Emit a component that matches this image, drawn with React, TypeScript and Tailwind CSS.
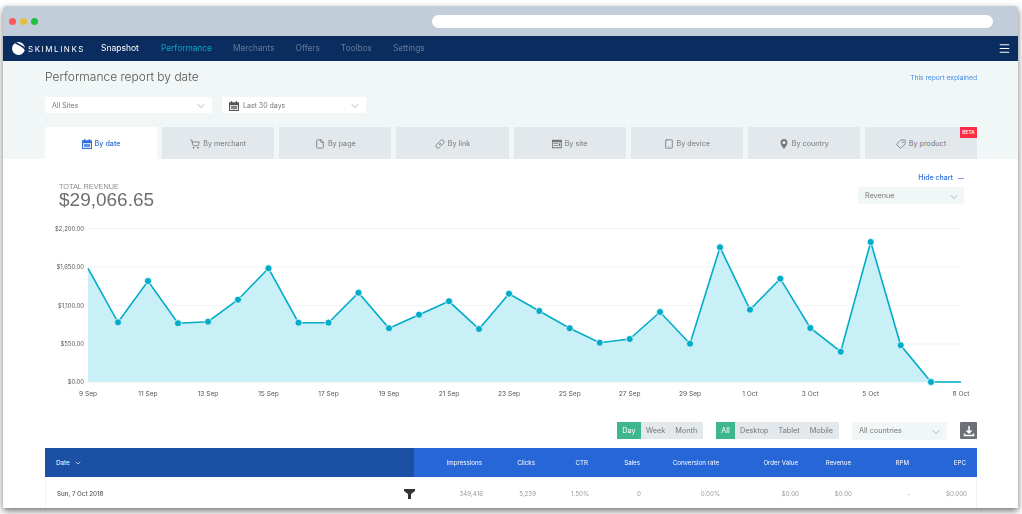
import { ChevronDown, File, Link, Menu, ShoppingCart, Tablet, Tag } from "lucide-react";

const CalendarIcon = ({ className }: { className?: string }) => (
  <svg viewBox="0 0 12 12" className={className} fill="currentColor">
    <rect x="2.5" y="0" width="1.4" height="3" />
    <rect x="8.1" y="0" width="1.4" height="3" />
    <path d="M0.5 1.5H12V12H0V1.5ZM1.2 5V10.8H10.8V5Z" fillRule="evenodd" />
    <path d="M2.2 6H9.8V9.8H2.2Z" opacity="0.75" />
  </svg>
);

const SiteIcon = ({ className }: { className?: string }) => (
  <svg viewBox="0 0 12 12" className={className} fill="currentColor">
    <path d="M0 1H12V11H0ZM1 4V10H11V4Z" fillRule="evenodd" />
    <path d="M2 5H7V6H2ZM2 7.5H7V8.5H2ZM8 5H10V8.5H8Z" />
  </svg>
);

const PinIcon = ({ className }: { className?: string }) => (
  <svg viewBox="0 0 12 12" className={className} fill="currentColor">
    <path
      d="M6 0C3.4 0 1.8 1.9 1.8 4.2C1.8 6.8 4.6 10 6 12C7.4 10 10.2 6.8 10.2 4.2C10.2 1.9 8.6 0 6 0ZM6 2.4A1.9 1.9 0 1 1 6 6.2A1.9 1.9 0 1 1 6 2.4Z"
      fillRule="evenodd"
    />
  </svg>
);

const FlippedTag = ({ className }: { className?: string }) => <Tag className={`${className} -scale-x-100`} />;

const navItems = ["Merchants", "Offers", "Toolbox", "Settings"];

const tabs = [
  { label: "By date", icon: CalendarIcon },
  { label: "By merchant", icon: ShoppingCart },
  { label: "By page", icon: File },
  { label: "By link", icon: Link },
  { label: "By site", icon: SiteIcon },
  { label: "By device", icon: Tablet },
  { label: "By country", icon: PinIcon },
  { label: "By product", icon: FlippedTag },
];

const points = [
  [88, 268.3], [118, 322.3], [148, 281], [178, 323.3], [208, 321.7], [238, 299.7],
  [268.5, 268.3], [298.5, 322.7], [328.5, 322.7], [358.5, 292.7], [389, 328.3],
  [419, 314.7], [449, 301.3], [479, 329], [509, 293.7], [539.3, 311], [569.7, 328.3],
  [599.7, 342.7], [629.7, 339], [660, 312], [690, 343.7], [720, 247.3], [750, 309.7],
  [780.3, 278.7], [810.3, 328], [840.7, 351.7], [870.7, 242], [900.7, 345.3], [931, 382],
  [961, 382],
];

const yLabels = [
  ["$2,200.00", 228.5],
  ["$1,650.00", 267],
  ["$1,100.00", 305.5],
  ["$550.00", 344],
  ["$0.00", 382],
] as const;

const xLabels = [
  ["9 Sep", 88], ["11 Sep", 148], ["13 Sep", 208], ["15 Sep", 268.5], ["17 Sep", 328.5],
  ["19 Sep", 389], ["21 Sep", 449], ["23 Sep", 509], ["25 Sep", 569.7], ["27 Sep", 629.7],
  ["29 Sep", 690], ["1 Oct", 750], ["3 Oct", 810.3], ["5 Oct", 870.7], ["8 Oct", 961],
] as const;

const columns = "grid grid-cols-[369px_68px_53px_53px_52px_79px_79px_53px_58px_57px]";
const headers = ["Impressions", "Clicks", "CTR", "Sales", "Conversion rate", "Order Value", "Revenue", "RPM", "EPC"];
const values = ["349,416", "5,239", "1.50%", "0", "0.00%", "$0.00", "$0.00", "-", "$0.000"];

const Chart = () => {
  const line = points.map((p) => p.join(",")).join(" ");
  return (
    <svg viewBox="3 220 1015 180" className="block h-[180px] w-[1015px]">
      {yLabels.map(([label, y]) => (
        <g key={label}>
          <line x1="88" x2="961" y1={y} y2={y} stroke="#eef3f6" strokeWidth="1" />
          <text x="84" y={y + 2} textAnchor="end" fontSize="5.9" fill="#555">
            {label}
          </text>
        </g>
      ))}
      <polygon points={`88,382 ${line} 961,382`} fill="#c9f0f7" />
      <polyline points={line} fill="none" stroke="#00acc9" strokeWidth="1.6" />
      {points.slice(1, -1).map(([x, y]) => (
        <circle key={x} cx={x} cy={y} r="3.5" fill="#00acc9" stroke="#fff" strokeWidth="0.7" />
      ))}
      {xLabels.map(([label, x]) => (
        <text key={label} x={x} y="396" textAnchor="middle" fontSize="6.6" fill="#555">
          {label}
        </text>
      ))}
    </svg>
  );
};

const App = () => {
  return (
    <div className="h-[514px] w-[1022px] overflow-hidden bg-white pl-[3px] pt-[6px] font-['Inter',sans-serif]">
      <div className="h-[502px] w-[1015px] overflow-hidden rounded-t-[3px] bg-white shadow-[0_3px_7px_rgba(0,0,0,0.55)] blur-[0.4px]">
        {/* Browser bar */}
        <div className="flex h-[30px] items-center justify-between bg-[#c1ced9] pl-[6px] pr-[25px]">
          <div className="flex gap-[4px]">
            <span className="h-[7px] w-[7px] rounded-full bg-[#fc5b57]" />
            <span className="h-[7px] w-[7px] rounded-full bg-[#e5bf3c]" />
            <span className="h-[7px] w-[7px] rounded-full bg-[#25c03f]" />
          </div>
          <div className="h-[13px] w-[561px] rounded-full bg-white" />
        </div>

        {/* Nav */}
        <div className="flex h-[25px] items-center justify-between bg-[#0a2c5e] pl-[9px] pr-[7px] text-[8.3px]">
          <div className="flex items-center">
            <svg viewBox="0 0 12 12" className="h-[13px] w-[13px]">
              <circle cx="6" cy="6" r="6" fill="#fff" />
              <path d="M2.5 1 C6 3.5 9 3.8 12 7.5 L12 5.4 C10 3 6.5 1.6 4 0.2Z" fill="#0a2c5e" />
            </svg>
            <span className="ml-[3px] w-[73px] text-[8px] tracking-[1.55px] text-white">SKIMLINKS</span>
            <span className="w-[60px] text-[8.5px] text-white">Snapshot</span>
            <span className="w-[72px] text-[#0aa5c5]">Performance</span>
            <div className="flex gap-[21px] text-[#657a97]">
              {navItems.map((item) => (
                <span key={item}>{item}</span>
              ))}
            </div>
          </div>
          <Menu className="h-[13px] w-[13px] text-white" />
        </div>

        {/* Report header */}
        <div className="bg-[#f1f6f7] pl-[42px] pr-[41px] pt-[8px]">
          <div className="flex items-start justify-between">
            <h1 className="text-[12px] font-light leading-[16px] text-[#555]">Performance report by date</h1>
            <a className="mt-[4px] text-[6.7px] text-[#3f8be8]">This report explained</a>
          </div>
          <div className="mt-[12px] flex gap-[10px]">
            <div className="flex h-[16px] w-[167px] items-center justify-between bg-white pl-[7px] pr-[5px] pt-[2px] text-[7px] text-[#777]">
              All Sites
              <ChevronDown className="h-[12px] w-[12px] text-[#8aa0b5]" strokeWidth={1.5} />
            </div>
            <div className="flex h-[16px] w-[144px] items-center justify-between bg-white pl-[7px] pr-[5px] pt-[2px] text-[7px] text-[#777]">
              <span className="flex items-center gap-[4px]">
                <CalendarIcon className="h-[10px] w-[10px] text-[#555]" />
                Last 30 days
              </span>
              <ChevronDown className="h-[12px] w-[12px] text-[#8aa0b5]" strokeWidth={1.5} />
            </div>
          </div>

          {/* Tabs */}
          <div className="mt-[14px] grid grid-cols-8 gap-[5px]">
            {tabs.map((tab, i) => (
              <div
                key={tab.label}
                className={
                  i === 0
                    ? "relative flex h-[32px] items-center justify-center gap-[3px] bg-white pt-[2px] text-[7.2px] font-medium text-[#2f6fd8]"
                    : "relative flex h-[32px] items-center justify-center gap-[3px] rounded-t-[1px] bg-[#e2e8ec] pt-[2px] text-[7.2px] text-[#777]"
                }
              >
                <tab.icon className="h-[10px] w-[10px]" />
                {tab.label}
                {tab.label === "By product" && (
                  <span className="absolute right-0 top-0 flex h-[11px] w-[17px] items-center justify-center bg-[#fb2d46] text-[5px] font-medium text-white">
                    BETA
                  </span>
                )}
              </div>
            ))}
          </div>
        </div>

        {/* Chart header */}
        <div className="flex h-[61px] justify-between pl-[56px] pr-[54px]">
          <div className="pt-[24px] font-['Liberation_Sans',sans-serif] text-[#6f6f6f]">
            <p className="text-[7.3px] leading-[8px] text-[#8a8a8a]">TOTAL REVENUE</p>
            <p className="text-[19px] leading-[17px]">$29,066.65</p>
          </div>
          <div className="flex flex-col items-end pt-[14px]">
            <div className="flex h-[10px] items-center gap-[5px] text-[7px] font-medium text-[#2f6fd8]">
              Hide chart
              <span className="h-px w-[6px] bg-[#7a9ee0]" />
            </div>
            <div className="mt-[4px] flex h-[17px] w-[106px] items-center justify-between bg-[#f1f6f7] pl-[7px] pr-[4px] pt-[2px] text-[7.2px] text-[#777]">
              Revenue
              <ChevronDown className="h-[12px] w-[12px] text-[#8aa0b5]" strokeWidth={1.5} />
            </div>
          </div>
        </div>

        <Chart />

        {/* Table filters */}
        <div className="mt-[22px] flex h-[18px] justify-end gap-[13px] pr-[41px] text-[7.3px] text-[#777]">
          <div className="flex h-[17px] w-[86px] items-center rounded-[1px] bg-[#e2e8ec]">
            <span className="flex h-full w-[24px] items-center justify-center bg-[#3fb78d] pt-[2px] text-white">Day</span>
            <span className="ml-[5px] pt-[2px]">Week</span>
            <span className="ml-[10px] pt-[2px]">Month</span>
          </div>
          <div className="flex h-[17px] w-[123px] items-center rounded-[1px] bg-[#e2e8ec]">
            <span className="flex h-full w-[19px] items-center justify-center bg-[#3fb78d] pt-[2px] text-white">All</span>
            <span className="ml-[5px] pt-[2px]">Desktop</span>
            <span className="ml-[10px] pt-[2px]">Tablet</span>
            <span className="ml-[10px] pt-[2px]">Mobile</span>
          </div>
          <div className="flex h-[18px] w-[95px] items-center justify-between bg-[#f1f6f7] pl-[7px] pr-[5px] pt-px">
            All countries
            <ChevronDown className="h-[12px] w-[12px] text-[#8aa0b5]" strokeWidth={1.5} />
          </div>
          <div className="flex h-[17px] w-[17px] items-center justify-center rounded-[1px] bg-[#6b6f76]">
            <svg viewBox="0 0 12 12" className="h-[12px] w-[12px]" fill="none" stroke="#fff" strokeWidth="1.5">
              <path d="M6 1V7.5M3.5 5.5L6 8L8.5 5.5" />
              <path d="M1.5 8.5V10.5H10.5V8.5" />
            </svg>
          </div>
        </div>

        {/* Table */}
        <div className="ml-[42px] mt-[8px] w-[932px] text-[6.2px]">
          <div className={`${columns} h-[29px] items-center bg-[#2766d6] text-white`}>
            <div className="flex h-full items-center gap-[4px] bg-[#1c50a5] pl-[11px]">
              Date
              <ChevronDown className="h-[8px] w-[8px]" />
            </div>
            {headers.map((h) => (
              <div key={h} className="text-right">
                {h}
              </div>
            ))}
          </div>
          <div className={`${columns} h-[31px] items-center border-x border-[#f1f4f6] pt-[2px] text-[#999]`}>
            <div className="flex items-center justify-between pl-[11px] font-medium text-[#555]">
              Sun, 7 Oct 2018
              <svg viewBox="0 0 11 10" className="mt-px h-[10px] w-[11px]">
                <path d="M0 0H11V2L7 5V10H4V5L0 2Z" fill="#333" />
              </svg>
            </div>
            {values.map((v, i) => (
              <div key={i} className="text-right">
                {v}
              </div>
            ))}
          </div>
        </div>
      </div>
    </div>
  );
};

export default App;
